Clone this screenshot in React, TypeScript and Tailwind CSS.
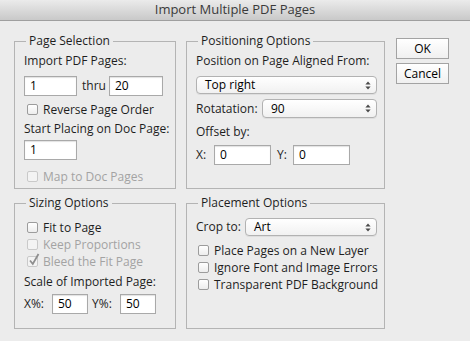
import React from 'react';

const font = { fontFamily: '"Open Sans", "Liberation Sans", sans-serif' };

function Group({ title, className, children }: { title: string; className?: string; children: React.ReactNode }) {
  return (
    <fieldset className={`border border-[#b4b4b4] pl-[9px] pr-[6px] ${className ?? ''}`}>
      <legend className="ml-[2px] px-[3px] text-[12px] leading-[14px] text-[#1e1e1e]">{title}</legend>
      {children}
    </fieldset>
  );
}

function Field({ value, w }: { value: string; w: string }) {
  return (
    <div className={`${w} h-[20px] bg-white border border-[#a9a9a9] shadow-[inset_0_1px_1px_rgba(0,0,0,0.12)] pl-[5px] text-[12px] leading-[18px] text-black`}>
      {value}
    </div>
  );
}

function Select({ value, w }: { value: string; w: string }) {
  return (
    <div className={`${w} flex items-center justify-between rounded-[4px] border border-[#b2b2b2] bg-gradient-to-b from-white to-[#f1f1f1] shadow-[0_1px_0_rgba(0,0,0,0.06)] pl-[8px] pr-[5px] text-[12px] text-black`}>
      <span>{value}</span>
      <svg width="6" height="9" viewBox="0 0 6 9">
        <path d="M3 0.5 L5.6 3.6 H0.4 Z" fill="#4a4a4a" />
        <path d="M3 8.5 L5.6 5.4 H0.4 Z" fill="#4a4a4a" />
      </svg>
    </div>
  );
}

function Check({ label, disabled, checked, className }: { label: string; disabled?: boolean; checked?: boolean; className?: string }) {
  return (
    <div className={`flex items-center h-[11px] whitespace-nowrap ${className ?? ''}`}>
      <div className={`relative shrink-0 w-[11px] h-[11px] rounded-[2px] border ${disabled ? 'border-[#c9c9c9] bg-[#f3f3f3]' : 'border-[#9c9c9c] bg-gradient-to-b from-white to-[#ededed]'}`}>
        {checked && (
          <svg className="absolute left-[0px] top-[-4px]" width="12" height="14" viewBox="0 0 12 14">
            <path d="M2 7.5 L4.8 11 L10.5 1" stroke="#8e8e8e" strokeWidth="1.8" fill="none" />
          </svg>
        )}
      </div>
      <span className={`ml-[5px] text-[12px] leading-[16px] ${disabled ? 'text-[#a3a3a3]' : 'text-[#1e1e1e]'}`}>{label}</span>
    </div>
  );
}

function Label({ children, className }: { children: React.ReactNode; className?: string }) {
  return <div className={`h-[16px] whitespace-nowrap text-[12px] leading-[16px] text-[#1e1e1e] ${className ?? ''}`}>{children}</div>;
}

function Button({ children, className }: { children: React.ReactNode; className?: string }) {
  return (
    <div className={`w-[53px] h-[21px] flex items-center justify-center border border-[#a3a3a3] bg-gradient-to-b from-white to-[#f0f0f0] text-[12px] text-black ${className ?? ''}`}>
      {children}
    </div>
  );
}

export default function App() {
  return (
    <div style={font} className="w-[470px] h-[341px] bg-[#ececec] overflow-hidden">
      {/* title bar */}
      <div className="h-[21px] flex items-center justify-center bg-gradient-to-b from-[#ebebeb] to-[#c9c9c9] border-b border-[#9f9f9f] text-[13px] text-[#3a3a3a]">
        Import Multiple PDF Pages
      </div>

      <div className="flex pl-[14px] pt-[13px] whitespace-nowrap">
        {/* left column */}
        <div className="w-[162px] flex flex-col">
          <Group title="Page Selection" className="h-[155px]">
            <Label className="mt-[5px]">Import PDF Pages:</Label>
            <div className="flex items-center mt-[7px]">
              <Field value="1" w="w-[53px]" />
              <span className="ml-[5px] mr-[3px] text-[12px] text-[#1e1e1e]">thru</span>
              <Field value="20" w="w-[54px]" />
            </div>
            <Check label="Reverse Page Order" className="mt-[8px] ml-[3px]" />
            <Label className="mt-[6px]">Start Placing on Doc Page:</Label>
            <div className="mt-[3px]">
              <Field value="1" w="w-[53px]" />
            </div>
            <Check label="Map to Doc Pages" disabled className="mt-[11px] ml-[3px]" />
          </Group>

          <Group title="Sizing Options" className="h-[133px] mt-[7px]">
            <Check label="Fit to Page" className="mt-[12px] ml-[3px]" />
            <Check label="Keep Proportions" disabled className="mt-[6px] ml-[3px]" />
            <Check label="Bleed the Fit Page" disabled checked className="mt-[6px] ml-[3px]" />
            <Label className="mt-[7px]">Scale of Imported Page:</Label>
            <div className="flex items-center mt-[4px]">
              <span className="w-[28px] text-[12px] text-[#1e1e1e]">X%:</span>
              <Field value="50" w="w-[36px]" />
              <span className="ml-[4px] w-[28px] text-[12px] text-[#1e1e1e]">Y%:</span>
              <Field value="50" w="w-[36px]" />
            </div>
          </Group>
        </div>

        {/* middle column */}
        <div className="w-[199px] ml-[10px] flex flex-col">
          <Group title="Positioning Options" className="h-[155px]">
            <Label className="mt-[5px]">Position on Page Aligned From:</Label>
            <div className="mt-[7px]">
              <Select value="Top right" w="w-[181px] h-[18px]" />
            </div>
            <div className="flex items-center mt-[5px]">
              <span className="w-[66px] text-[12px] text-[#1e1e1e]">Rotatation:</span>
              <Select value="90" w="w-[115px] h-[19px]" />
            </div>
            <Label className="mt-[6px]">Offset by:</Label>
            <div className="flex items-center mt-[5px]">
              <span className="w-[18px] text-[12px] text-[#1e1e1e]">X:</span>
              <Field value="0" w="w-[57px]" />
              <span className="ml-[6px] w-[16px] text-[12px] text-[#1e1e1e]">Y:</span>
              <Field value="0" w="w-[57px]" />
            </div>
          </Group>

          <Group title="Placement Options" className="h-[133px] mt-[7px]">
            <div className="flex items-center mt-[8px]">
              <span className="w-[49px] text-[12px] text-[#1e1e1e]">Crop to:</span>
              <Select value="Art" w="w-[132px] h-[18px]" />
            </div>
            <Check label="Place Pages on a New Layer" className="mt-[9px] ml-[2px]" />
            <Check label="Ignore Font and Image Errors" className="mt-[6px] ml-[2px]" />
            <Check label="Transparent PDF Background" className="mt-[6px] ml-[2px]" />
          </Group>
        </div>

        {/* buttons */}
        <div className="ml-[11px] pt-[4px] flex flex-col">
          <Button>OK</Button>
          <Button className="mt-[4px]">Cancel</Button>
        </div>
      </div>
    </div>
  );
}
